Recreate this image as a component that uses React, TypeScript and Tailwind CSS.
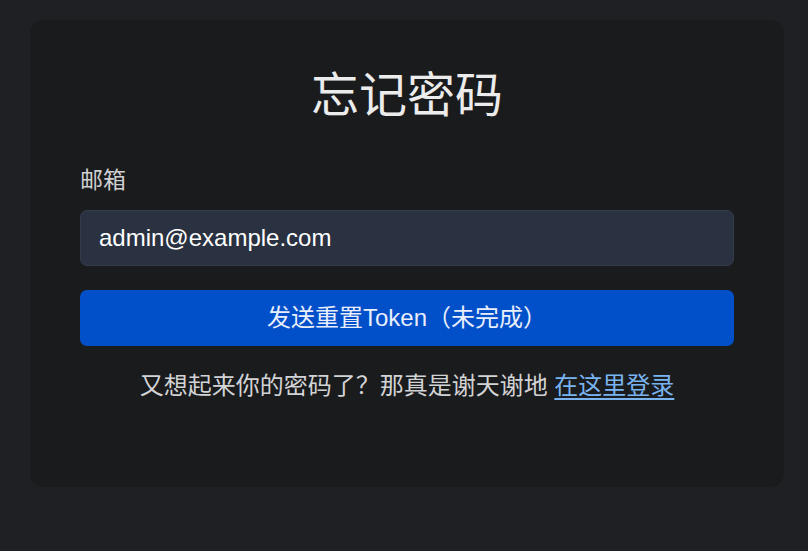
export default function App() {
  return (
    <div
      className="min-h-[551px] w-full bg-[#1f2023] pt-[20px] pb-[64px]"
      style={{ fontFamily: '"Liberation Sans", "Noto Sans CJK SC", sans-serif' }}
    >
      <div className="ml-[30px] w-[754px] h-[467px] rounded-[14px] bg-[#1a1b1d] px-[50px] pt-[48px]">
        <h1 className="text-center text-[48px] leading-[56px] text-[#ececec]">忘记密码</h1>

        <form className="mt-[40px] flex flex-col" onSubmit={(e) => e.preventDefault()}>
          <label className="text-[23px] leading-[32px] text-[#cfd0d2]">邮箱</label>
          <input
            type="email"
            defaultValue="admin@example.com"
            className="mt-[14px] h-[56px] w-full rounded-[7px] border border-[#343b49] bg-[#2a3140] px-[18px] text-[24px] text-white outline-none"
          />
          <button
            type="submit"
            className="mt-[24px] h-[56px] w-full rounded-[7px] bg-[#0150c9] text-[24px] text-[#e8eefc]"
          >
            发送重置Token（未完成）
          </button>
        </form>

        <p className="mt-[23px] text-center text-[24px] leading-[34px] text-[#d2d3d5]">
          又想起来你的密码了？那真是谢天谢地{" "}
          <a href="#" className="text-[#79b4f0] underline underline-offset-4">
            在这里登录
          </a>
        </p>
      </div>
    </div>
  );
}
